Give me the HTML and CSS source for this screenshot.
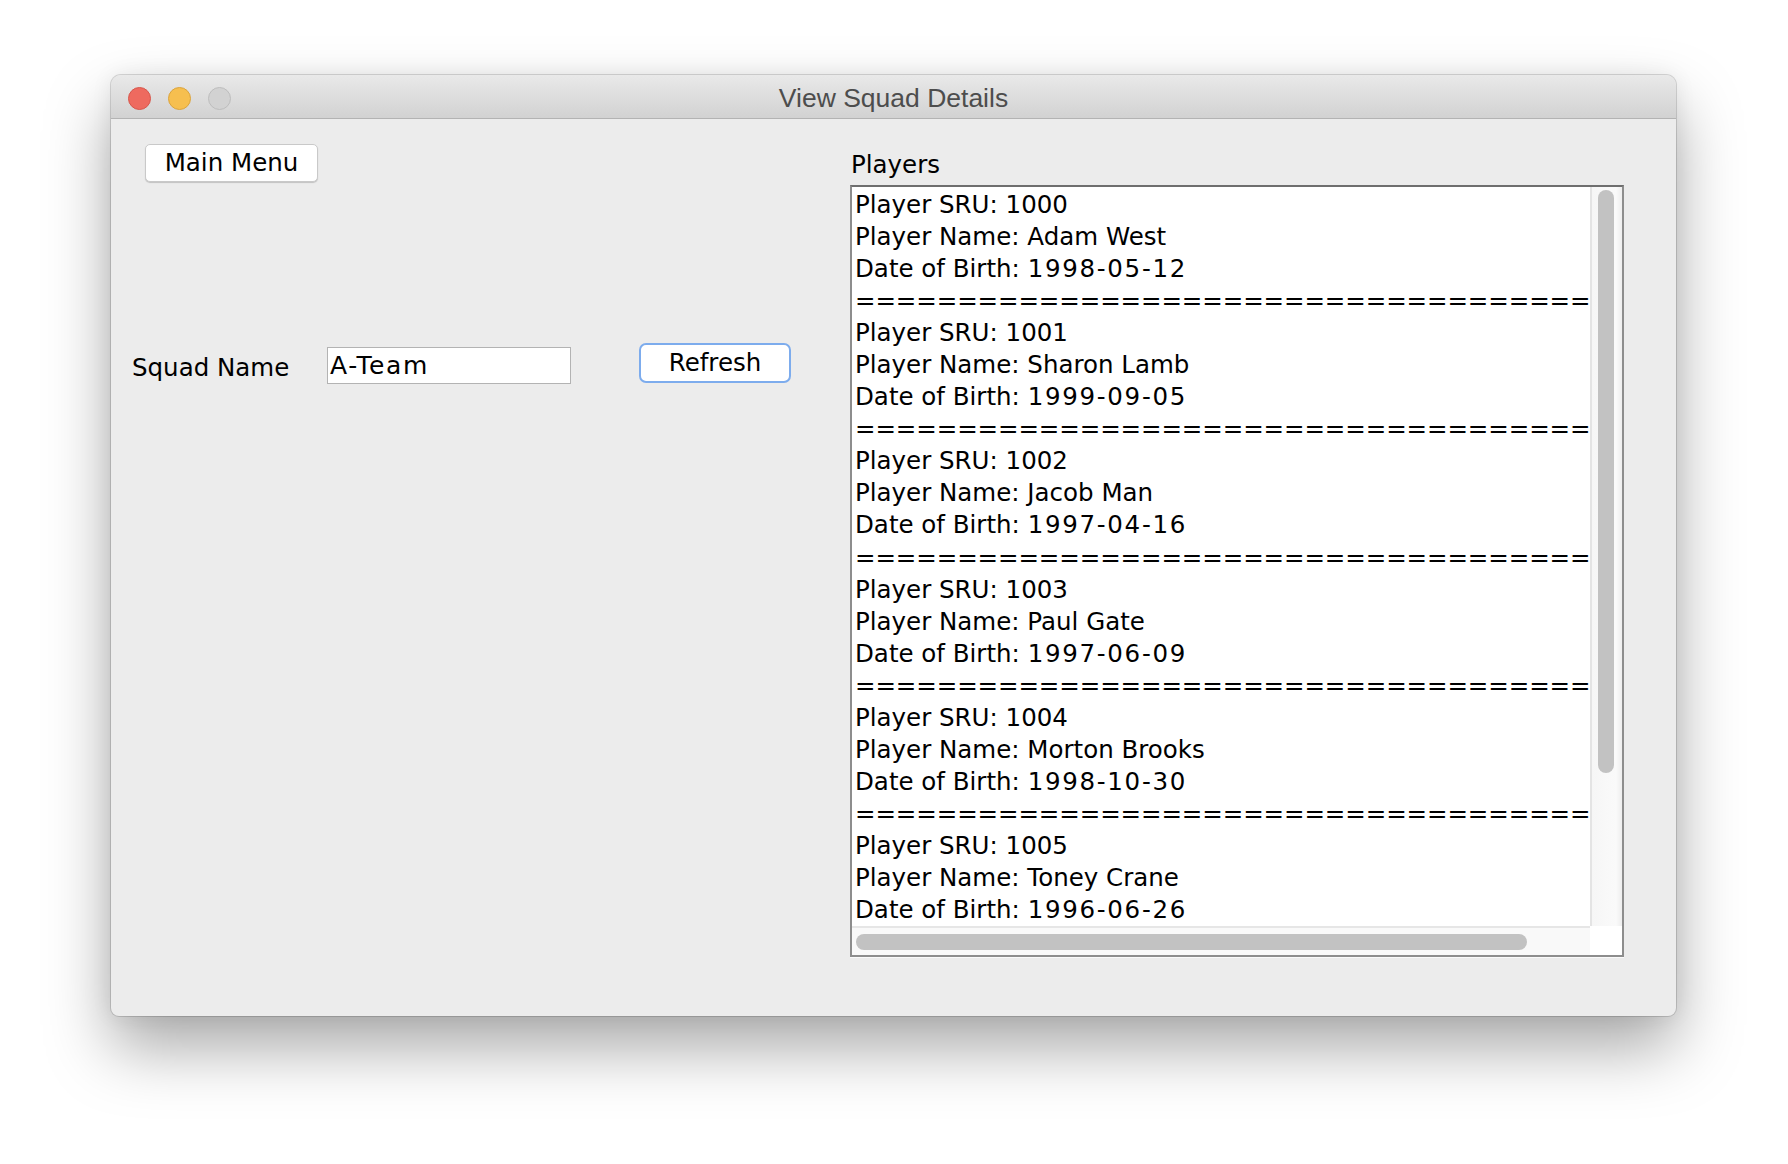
FILE: index.html
```html
<!DOCTYPE html>
<html>
<head>
<meta charset="utf-8">
<title>View Squad Details</title>
<link rel="stylesheet" href="styles.css">
</head>
<body>
<div class="window">
  <div class="titlebar">
    <div class="lights">
      <span class="light red"></span>
      <span class="light yellow"></span>
      <span class="light grey"></span>
    </div>
    <div class="title">View Squad Details</div>
    <div></div>
  </div>
  <div class="content">
    <div class="left">
      <button class="btn main-menu">Main Menu</button>
      <div class="squad-row">
        <label class="squad-label">Squad Name</label>
        <div class="field">A-Team</div>
        <button class="btn refresh">Refresh</button>
      </div>
    </div>
    <div class="right">
      <div class="players-label">Players</div>
      <div class="scrollpane">
        <div class="viewport"><div class="line">Player SRU: 1000</div><div class="line">Player Name: Adam West</div><div class="line">Date of Birth: <span class="date">1998-05-12</span></div><div class="line sep">====================================</div><div class="line">Player SRU: 1001</div><div class="line">Player Name: Sharon Lamb</div><div class="line">Date of Birth: <span class="date">1999-09-05</span></div><div class="line sep">====================================</div><div class="line">Player SRU: 1002</div><div class="line">Player Name: Jacob Man</div><div class="line">Date of Birth: <span class="date">1997-04-16</span></div><div class="line sep">====================================</div><div class="line">Player SRU: 1003</div><div class="line">Player Name: Paul Gate</div><div class="line">Date of Birth: <span class="date">1997-06-09</span></div><div class="line sep">====================================</div><div class="line">Player SRU: 1004</div><div class="line">Player Name: Morton Brooks</div><div class="line">Date of Birth: <span class="date">1998-10-30</span></div><div class="line sep">====================================</div><div class="line">Player SRU: 1005</div><div class="line">Player Name: Toney Crane</div><div class="line">Date of Birth: <span class="date">1996-06-26</span></div></div>
        <div class="vscroll"><div class="vthumb"></div></div>
        <div class="hscroll"><div class="hthumb"></div></div>
        <div class="corner"></div>
      </div>
    </div>
  </div>
</div>
</body>
</html>
```
FILE: styles.css
```css
html, body {
  margin: 0;
  padding: 0;
  background: #ffffff;
}
body {
  box-sizing: border-box;
  min-height: 1164px;
  padding: 75px 0 0 111px;
  font-family: "DejaVu Sans", "Noto Sans", sans-serif;
}
.window {
  width: 1565px;
  height: 941px;
  background: #ececec;
  border-radius: 10px 10px 8px 8px;
  overflow: hidden;
  box-shadow: 0 0 0 1px rgba(0,0,0,0.14), 0 32px 65px rgba(0,0,0,0.34), 0 0 22px rgba(0,0,0,0.07);
}
.titlebar {
  box-sizing: border-box;
  height: 44px;
  background: linear-gradient(#e9e9e9, #d2d2d2);
  border-bottom: 1px solid #b3b3b3;
  display: grid;
  grid-template-columns: 1fr auto 1fr;
  align-items: center;
}
.lights {
  display: flex;
  gap: 17px;
  padding-left: 17px;
  padding-top: 2px;
}
.light {
  box-sizing: border-box;
  width: 23px;
  height: 23px;
  border-radius: 50%;
  display: block;
}
.red { background: #ee6a5f; border: 1px solid #d7574c; }
.yellow { background: #f6bf4f; border: 1px solid #dba43d; }
.grey { background: #d2d2d2; border: 1px solid #bdbdbd; }
.title {
  font-family: "Liberation Sans", Arial, sans-serif;
  font-size: 26.5px;
  color: #4d4d4d;
  line-height: 41px;
  padding-top: 3px;
}
.content {
  display: flex;
  height: 897px;
}
.left {
  width: 739px;
  flex: none;
  padding-top: 25px;
  box-sizing: border-box;
}
.btn {
  font-family: "DejaVu Sans", "Noto Sans", sans-serif;
  font-size: 24.5px;
  color: #000;
  background: #ffffff;
  padding: 0;
  margin: 0;
  box-sizing: border-box;
  text-align: center;
  display: block;
}
.main-menu {
  margin-left: 34px;
  width: 173px;
  height: 38px;
  line-height: 36px;
  border: 1px solid #c9c9c9;
  border-radius: 5px;
  box-shadow: 0 1px 1px rgba(0,0,0,0.18);
}
.squad-row {
  margin-top: 161px;
  padding-left: 21px;
  display: flex;
  align-items: flex-start;
  height: 41px;
}
.squad-label {
  width: 195px;
  flex: none;
  font-size: 24.5px;
  line-height: 41px;
  margin-top: 4px;
  color: #000;
}
.field {
  box-sizing: border-box;
  width: 244px;
  height: 37px;
  margin-top: 4px;
  border: 1px solid #b3b3b3;
  background: #fff;
  padding: 1px 0 0 2px;
  font-size: 25px;
  letter-spacing: 1.6px;
  line-height: 34px;
  color: #000;
  flex: none;
}
.refresh {
  margin-left: 68px;
  width: 152px;
  height: 40px;
  line-height: 36px;
  border: 2px solid #7daced;
  border-radius: 7px;
  flex: none;
}
.right {
  padding-top: 31px;
}
.players-label {
  font-size: 24.5px;
  line-height: 30px;
  margin-left: 1px;
  margin-bottom: 5px;
  color: #000;
}
.scrollpane {
  box-sizing: border-box;
  width: 774px;
  height: 772px;
  border: 2px solid #8d8d8d;
  border-top-color: #6e6e6e;
  box-shadow: 0 1px 0 #fafafa;
  display: grid;
  grid-template-columns: 1fr 32px;
  grid-template-rows: 1fr 29px;
  background: #fff;
}
.viewport {
  overflow: hidden;
  background: #fff;
  padding: 2px 0 0 3px;
  font-size: 24.5px;
  line-height: 32.05px;
  color: #000;
  white-space: pre;
}
.line {
  height: 32.05px;
}
.sep {
  letter-spacing: -0.1px;
}
.date {
  letter-spacing: 1.7px;
}
.vscroll {
  box-sizing: border-box;
  background: linear-gradient(90deg, #f6f6f6, #fafafa 80%, #eeeeee);
  border-left: 2px solid #e4e4e4;
  padding: 3px 0 0 6px;
}
.vthumb {
  width: 16px;
  height: 583px;
  border-radius: 8px;
  background: #c2c2c2;
}
.hscroll {
  box-sizing: border-box;
  background: #f9f9f9;
  border-top: 2px solid #e6e6e6;
  padding: 6px 0 0 4px;
}
.hthumb {
  width: 671px;
  height: 16px;
  border-radius: 8px;
  background: #c2c2c2;
}
.corner {
  background: #ffffff;
}
```
